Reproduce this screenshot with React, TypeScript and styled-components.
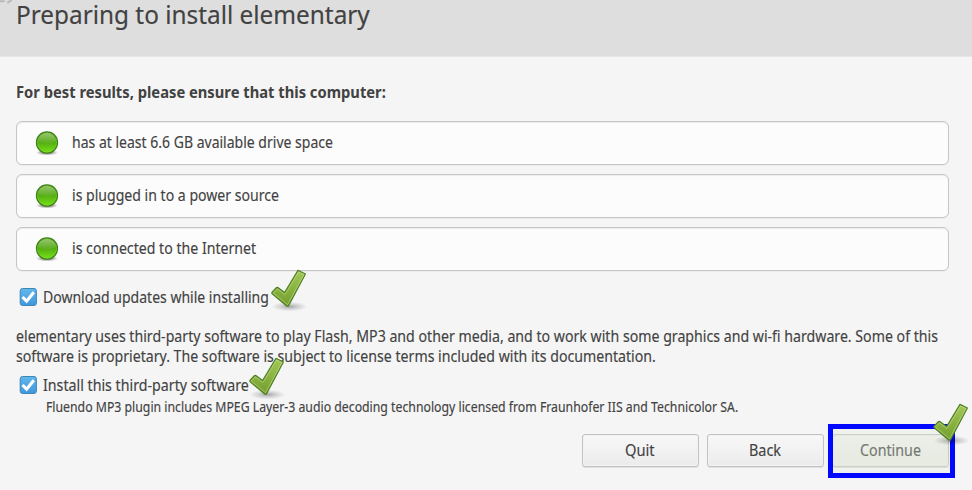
import React, { useLayoutEffect, useRef, useState } from "react";
import styled, { createGlobalStyle } from "styled-components";

const GlobalStyle = createGlobalStyle`
  * { box-sizing: border-box; }
  body { margin: 0; overflow: hidden; background: #f5f5f5; }
`;

const Window = styled.div`
  width: 972px;
  height: 490px;
  display: flex;
  flex-direction: column;
  background: #f5f5f5;
  color: #424242;
  font: 16.6px/20px "Noto Sans", sans-serif;
  -webkit-text-stroke: 0.15px currentColor;
  overflow: hidden;
`;

const Header = styled.header`
  position: relative;
  height: 57px;
  flex: none;
  padding-left: 15.5px;
  background: #dedede;
  border-bottom: 1px solid #e6e6e6;
`;

const Title = styled.h1`
  margin: 0;
  font-size: 26px;
  font-weight: 400;
  line-height: 28px;
`;

const Smudge = styled.svg`
  position: absolute;
  left: 0;
  top: 0;
`;

const Content = styled.main`
  display: flex;
  flex-direction: column;
  flex: 1;
  padding: 25px 23px 0 15.5px;
`;

const Lead = styled.h2`
  margin: 0 0 19px;
  height: 20px;
  font-size: 16.3px;
  font-weight: 700;
  line-height: 20px;
  -webkit-text-stroke: 0;
`;

const Requirements = styled.ul`
  display: flex;
  flex-direction: column;
  gap: 9px;
  margin: 0;
  padding: 0;
  list-style: none;
`;

const Requirement = styled.li`
  display: flex;
  align-items: center;
  gap: 12px;
  height: 44px;
  padding: 0 0 2px 17.5px;
  background: #fcfcfc;
  border: 1px solid #c6c6c6;
  border-radius: 6px;
  box-shadow: inset 0 1px 1px #ebebeb, 0 1px 0 #ececec;

  svg { margin-top: 2px; }
`;

const CheckLine = styled.label<{ $top: number }>`
  display: flex;
  align-items: center;
  align-self: flex-start;
  position: relative;
  gap: 5px;
  height: 20px;
  margin-top: ${(p) => p.$top}px;
  padding-left: 3.5px;
`;

const Paragraph = styled.p`
  margin: 19px 0 0;
  line-height: 19.5px;
`;

const Note = styled.small`
  height: 18px;
  margin-top: 3px;
  padding-left: 30.5px;
  font-size: 13.8px;
  line-height: 18px;
`;

const Actions = styled.footer`
  display: flex;
  justify-content: flex-end;
  gap: 8px;
  margin-top: 18px;
`;

const ButtonSlot = styled.div`
  position: relative;
  width: 117px;
  height: 33px;
`;

const Button = styled.button<{ $muted?: boolean }>`
  display: flex;
  align-items: center;
  justify-content: center;
  width: 100%;
  height: 100%;
  padding: 0 1px 1px 0;
  border: 1px solid ${(p) => (p.$muted ? "#c9ccc5" : "#c2c2c2")};
  border-radius: 3px;
  background: ${(p) =>
    p.$muted ? "linear-gradient(#f0f1ee, #e9ece5)" : "linear-gradient(#f8f8f8, #ebebeb)"};
  box-shadow: inset 0 0 0 1px ${(p) => (p.$muted ? "#eaece7" : "#f3f3f3")}, 0 1px 0 #e0e0e0;
  color: ${(p) => (p.$muted ? "#656765" : "#424242")};
  font: inherit;
`;

const Highlight = styled.div`
  position: absolute;
  left: -4px;
  top: -10px;
  width: 127px;
  height: 54px;
  border: 5px solid #0008ff;
  background: rgba(215, 226, 200, 0.14);
  pointer-events: none;
`;

const MarkSvg = styled.svg<{ $x: number; $y: number }>`
  position: absolute;
  left: ${(p) => p.$x}px;
  top: ${(p) => p.$y}px;
  pointer-events: none;
`;

const FitBox = styled.span`
  display: block;
  white-space: nowrap;
`;

const FitInner = styled.span`
  display: block;
  width: max-content;
  transform-origin: 0 50%;
`;

/* Condenses a line of text to the given width. */
function Fit({ width, children }: { width: number; children: React.ReactNode }) {
  const ref = useRef<HTMLSpanElement>(null);
  const [scale, setScale] = useState(1);
  useLayoutEffect(() => {
    if (ref.current) setScale(width / ref.current.offsetWidth);
  }, [width]);
  return (
    <FitBox style={{ width }}>
      <FitInner ref={ref} style={{ transform: `scaleX(${scale})` }}>
        {children}
      </FitInner>
    </FitBox>
  );
}

function StatusLight({ id }: { id: string }) {
  return (
    <svg width="26" height="28" viewBox="0 0 26 28">
      <defs>
        <linearGradient id={`${id}f`} x1="0" y1="0" x2="0" y2="1">
          <stop offset="0" stopColor="#64a92c" />
          <stop offset="0.45" stopColor="#50a910" />
          <stop offset="1" stopColor="#77e316" />
        </linearGradient>
        <linearGradient id={`${id}g`} x1="0" y1="0" x2="0" y2="1">
          <stop offset="0" stopColor="#fff" stopOpacity="0.32" />
          <stop offset="1" stopColor="#fff" stopOpacity="0.06" />
        </linearGradient>
        <radialGradient id={`${id}s`}>
          <stop offset="0.4" stopColor="#000" stopOpacity="0.4" />
          <stop offset="1" stopColor="#000" stopOpacity="0" />
        </radialGradient>
      </defs>
      <ellipse cx="13" cy="23.5" rx="11" ry="3" fill={`url(#${id}s)`} />
      <circle cx="13" cy="13.5" r="10.6" fill={`url(#${id}f)`} stroke="#3b8212" strokeWidth="1.1" />
      <circle cx="13" cy="13.5" r="9.5" fill="none" stroke="#94d65b" strokeOpacity="0.4" strokeWidth="0.8" />
      <path d="M4 12.6a9 8.6 0 0 1 18 0q-9 3-18 0Z" fill={`url(#${id}g)`} />
    </svg>
  );
}

function Checkbox({ id }: { id: string }) {
  return (
    <svg width="19" height="20" viewBox="0 0 19 20">
      <defs>
        <linearGradient id={id} x1="0" y1="0" x2="0" y2="1">
          <stop offset="0" stopColor="#62b7ea" />
          <stop offset="1" stopColor="#3f97dc" />
        </linearGradient>
      </defs>
      <rect x="1.2" y="1.5" width="16.2" height="17" rx="2.4" fill={`url(#${id})`} stroke="#3c86b8" />
      <path d="M3.5 10 7.6 14.2 14.8 5.2" fill="none" stroke="#fff" strokeWidth="3.1" />
    </svg>
  );
}

function Mark({ id, x, y }: { id: string; x: number; y: number }) {
  return (
    <MarkSvg $x={x} $y={y} width="40" height="46" viewBox="0 0 40 46">
      <defs>
        <linearGradient id={`${id}f`} x1="0" y1="0" x2="0" y2="1">
          <stop offset="0" stopColor="#a3c957" />
          <stop offset="1" stopColor="#729d2c" />
        </linearGradient>
        <radialGradient id={`${id}s`}>
          <stop offset="0" stopColor="#000" stopOpacity="0.32" />
          <stop offset="0.5" stopColor="#000" stopOpacity="0.14" />
          <stop offset="1" stopColor="#000" stopOpacity="0" />
        </radialGradient>
      </defs>
      <ellipse cx="19.5" cy="38.6" rx="18" ry="4.8" fill={`url(#${id}s)`} />
      <path
        d="M28 2.4 35.4 6 18.3 38.2 17 38.2 1.9 25.6 1.9 24.4 6.6 19.5 7.8 19.4 14.6 24.6Z"
        fill={`url(#${id}f)`}
        stroke="#4d8022"
        strokeWidth="1.2"
        strokeLinejoin="round"
      />
      <path
        d="M28.5 3.9 33.9 6.5 17.6 36.7 3.3 25 7.3 20.8 15 26.4Z"
        fill="none"
        stroke="#d3e6a5"
        strokeOpacity="0.6"
        strokeWidth="0.8"
        strokeLinejoin="round"
      />
    </MarkSvg>
  );
}

const requirements = [
  { text: "has at least 6.6 GB available drive space", width: 261 },
  { text: "is plugged in to a power source", width: 207 },
  { text: "is connected to the Internet", width: 184 },
];

export default function App() {
  return (
    <>
      <GlobalStyle />
      <Window>
        <Header>
          <Smudge width="18" height="7" viewBox="0 0 18 7">
            <path d="M0 1.2h4M8 2.4l3-2" stroke="#a2a2a2" strokeWidth="2" strokeLinecap="round" opacity="0.6" />
          </Smudge>
          <Title>
            <Fit width={354}>Preparing to install elementary</Fit>
          </Title>
        </Header>
        <Content>
          <Lead>
            <Fit width={370}>For best results, please ensure that this computer:</Fit>
          </Lead>
          <Requirements>
            {requirements.map((r, i) => (
              <Requirement key={r.text}>
                <StatusLight id={`light${i}`} />
                <Fit width={r.width}>{r.text}</Fit>
              </Requirement>
            ))}
          </Requirements>
          <CheckLine $top={16}>
            <Checkbox id="box1" />
            <Fit width={225.5}>Download updates while installing</Fit>
            <Mark id="mark1" x={254.5} y={-18.6} />
          </CheckLine>
          <Paragraph>
            <Fit width={922}>
              elementary uses third-party software to play Flash, MP3 and other media, and to work with some graphics and wi-fi hardware. Some of this
            </Fit>
            <Fit width={640}>
              software is proprietary. The software is subject to license terms included with its documentation.
            </Fit>
          </Paragraph>
          <CheckLine $top={10}>
            <Checkbox id="box2" />
            <Fit width={205.5}>Install this third-party software</Fit>
            <Mark id="mark2" x={232.1} y={-18.6} />
          </CheckLine>
          <Note>
            <Fit width={692}>
              Fluendo MP3 plugin includes MPEG Layer-3 audio decoding technology licensed from Fraunhofer IIS and Technicolor SA.
            </Fit>
          </Note>
          <Actions>
            <ButtonSlot>
              <Button><Fit width={30}>Quit</Fit></Button>
            </ButtonSlot>
            <ButtonSlot>
              <Button><Fit width={32}>Back</Fit></Button>
            </ButtonSlot>
            <ButtonSlot>
              <Button $muted><Fit width={61}>Continue</Fit></Button>
              <Highlight />
              <Mark id="mark3" x={99.5} y={-32} />
            </ButtonSlot>
          </Actions>
        </Content>
      </Window>
    </>
  );
}
